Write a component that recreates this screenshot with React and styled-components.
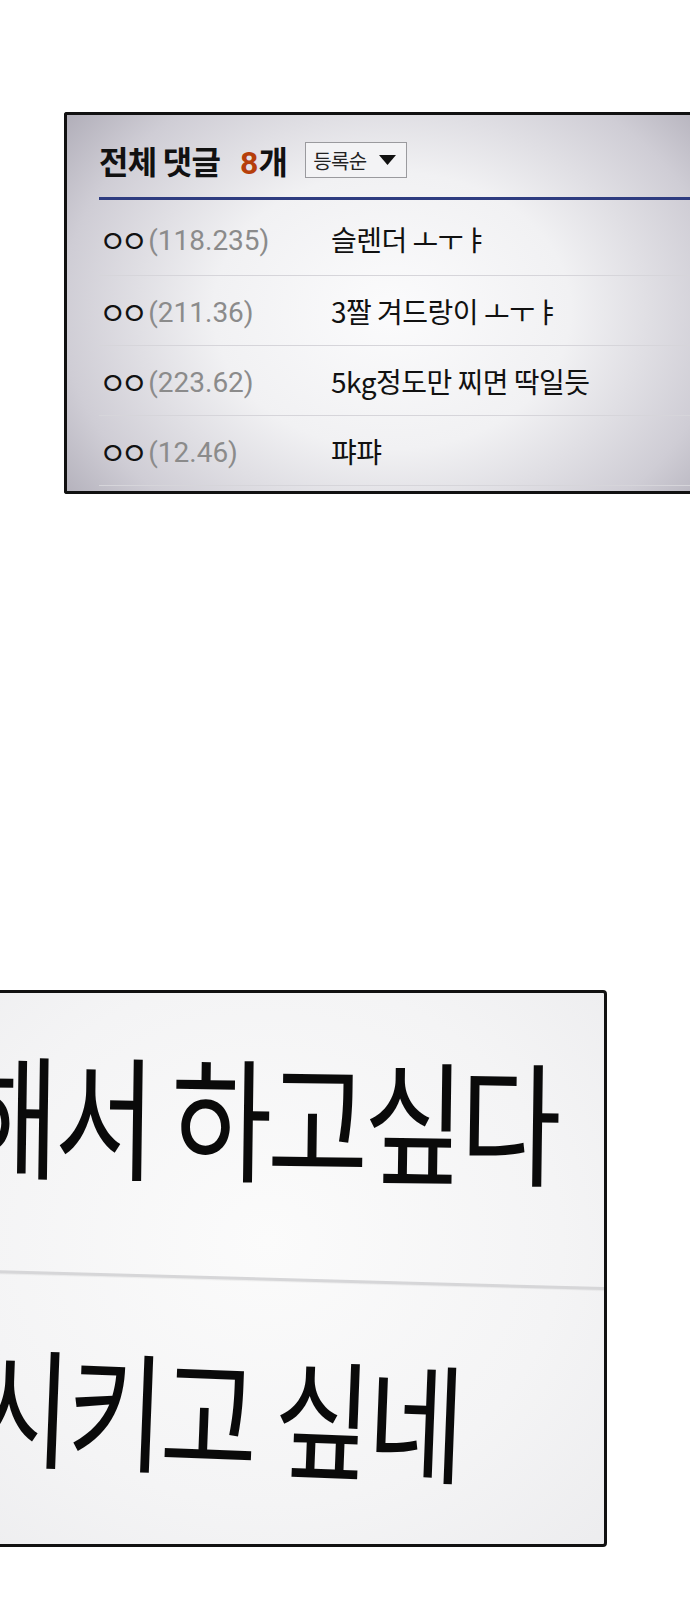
import React from 'react';
import styled, { createGlobalStyle } from 'styled-components';

const GlobalStyle = createGlobalStyle`
  html, body {
    margin: 0;
    padding: 0;
    background: #ffffff;
    overflow-x: hidden;
  }
  body {
    font-family: Roboto, "Noto Sans CJK KR", sans-serif;
    color: #111;
  }
`;

const Page = styled.div`
  width: 690px;
  height: 1600px;
  overflow: hidden;
  padding-top: 112px;
  box-sizing: border-box;
  background: #fff;
`;

/* comment board panel */
const Board = styled.section`
  margin-left: 64px;
  width: 680px;
  box-sizing: border-box;
  border: 3px solid #111;
  border-right: none;
  border-radius: 3px 0 0 3px;
  padding: 0 0 5px 32px;
  background: radial-gradient(
    ellipse 66% 92% at 48% 52%,
    #fbfbfc 0%,
    #f1f1f3 40%,
    #cfcdd5 74%,
    #a4a1ad 100%
  );
`;

const Header = styled.header`
  display: flex;
  align-items: center;
  height: 85px;
  box-sizing: border-box;
  padding-top: 8px;
  border-bottom: 3px solid #2e3c80;
`;

const Title = styled.h2`
  margin: 0;
  font-family: "Noto Sans CJK KR", sans-serif;
  font-size: 32px;
  font-weight: 700;
  letter-spacing: -0.8px;
  color: #111;
`;

const Count = styled.span`
  margin-left: 20px;
  font-family: "Noto Sans CJK KR", sans-serif;
  font-size: 32px;
  font-weight: 700;
  letter-spacing: -0.8px;
  color: #111;

  b {
    font-family: Roboto, sans-serif;
    font-weight: 700;
    color: #b63f0b;
    margin-right: 1px;
  }
`;

const SortBox = styled.div`
  margin-left: 18px;
  width: 102px;
  height: 36px;
  box-sizing: border-box;
  border: 1px solid #9a9a9e;
  background: #f3f3f5;
  display: flex;
  align-items: center;
  gap: 12px;
  padding-left: 7px;
  font-family: "Noto Sans CJK KR", sans-serif;
  font-size: 20px;
  letter-spacing: -0.6px;
  color: #222;
`;

const Row = styled.div`
  display: flex;
  align-items: center;
  height: ${(p) => (p.$first ? 76 : 70)}px;
  box-sizing: border-box;
  padding-top: ${(p) => (p.$first ? 2 : 0)}px;
  border-bottom: 1px solid #d6d5da;
`;

const Author = styled.div`
  width: 232px;
  flex-shrink: 0;
  font-family: Roboto, sans-serif;
  font-size: 28px;
  color: #8b8b8b;
  white-space: nowrap;
`;

const Nick = styled.span`
  font-family: "Noto Sans CJK KR", sans-serif;
  font-size: 30px;
  letter-spacing: -6px;
  color: #111;
  margin-right: 6px;
  vertical-align: -2px;
`;

const Comment = styled.div`
  font-family: "Noto Sans CJK KR", sans-serif;
  font-size: 28px;
  letter-spacing: -0.5px;
  color: #111;
  white-space: nowrap;
`;

/* lower cut with the zoomed-in text, drawn a little skewed */
const Cut = styled.section`
  margin-top: 496px;
  margin-left: -10px;
  width: 617px;
  height: 557px;
  box-sizing: border-box;
  border: 3px solid #111;
  border-radius: 4px;
  overflow: hidden;
  background: radial-gradient(ellipse 80% 80% at 45% 45%, #fbfbfb 0%, #f4f4f5 60%, #ececee 100%);
`;

const BigLine = styled.div`
  height: ${(p) => p.$height}px;
  padding-top: ${(p) => p.$top}px;
  box-sizing: border-box;
  margin-left: ${(p) => p.$shift}px;
  font-family: "Noto Sans CJK KR", sans-serif;
  font-size: ${(p) => p.$size}px;
  line-height: 1;
  letter-spacing: ${(p) => p.$spacing}px;
  color: #0a0a0a;
  white-space: nowrap;
  transform: rotate(${(p) => p.$tilt}deg);
  transform-origin: 0 0;

  span {
    display: inline-block;
    transform: scaleX(0.82);
    transform-origin: 0 50%;
  }
`;

const Rule = styled.div`
  height: 3px;
  width: 130%;
  background: #d6d6d8;
  box-shadow: 0 1px 1px rgba(0, 0, 0, 0.05);
  transform: rotate(1.6deg);
  transform-origin: 0 0;
`;

const comments = [
  { ip: '(118.235)', text: '슬렌더 ㅗㅜㅑ' },
  { ip: '(211.36)', text: '3짤 겨드랑이 ㅗㅜㅑ' },
  { ip: '(223.62)', text: '5kg정도만 찌면 딱일듯' },
  { ip: '(12.46)', text: '퍄퍄' },
];

const Caret = () => (
  <svg width="17" height="10" viewBox="0 0 17 10">
    <polygon points="0,0 17,0 8.5,10" fill="#111" />
  </svg>
);

export default function App() {
  return (
    <Page>
      <GlobalStyle />
      <Board>
        <Header>
          <Title>전체 댓글</Title>
          <Count>
            <b>8</b>개
          </Count>
          <SortBox>
            등록순 <Caret />
          </SortBox>
        </Header>
        {comments.map((c, i) => (
          <Row key={c.ip} $first={i === 0}>
            <Author>
              <Nick>ㅇㅇ</Nick>
              {c.ip}
            </Author>
            <Comment>{c.text}</Comment>
          </Row>
        ))}
      </Board>

      <Cut>
        <BigLine $height={277} $top={50} $shift={-33} $size={134} $spacing={-5.7} $tilt={0.8}>
          <span>해서 하고싶다</span>
        </BigLine>
        <Rule />
        <BigLine $height={270} $top={62} $shift={-14} $size={129} $spacing={-4.6} $tilt={2.2}>
          <span>시키고 싶네</span>
        </BigLine>
      </Cut>
    </Page>
  );
}
